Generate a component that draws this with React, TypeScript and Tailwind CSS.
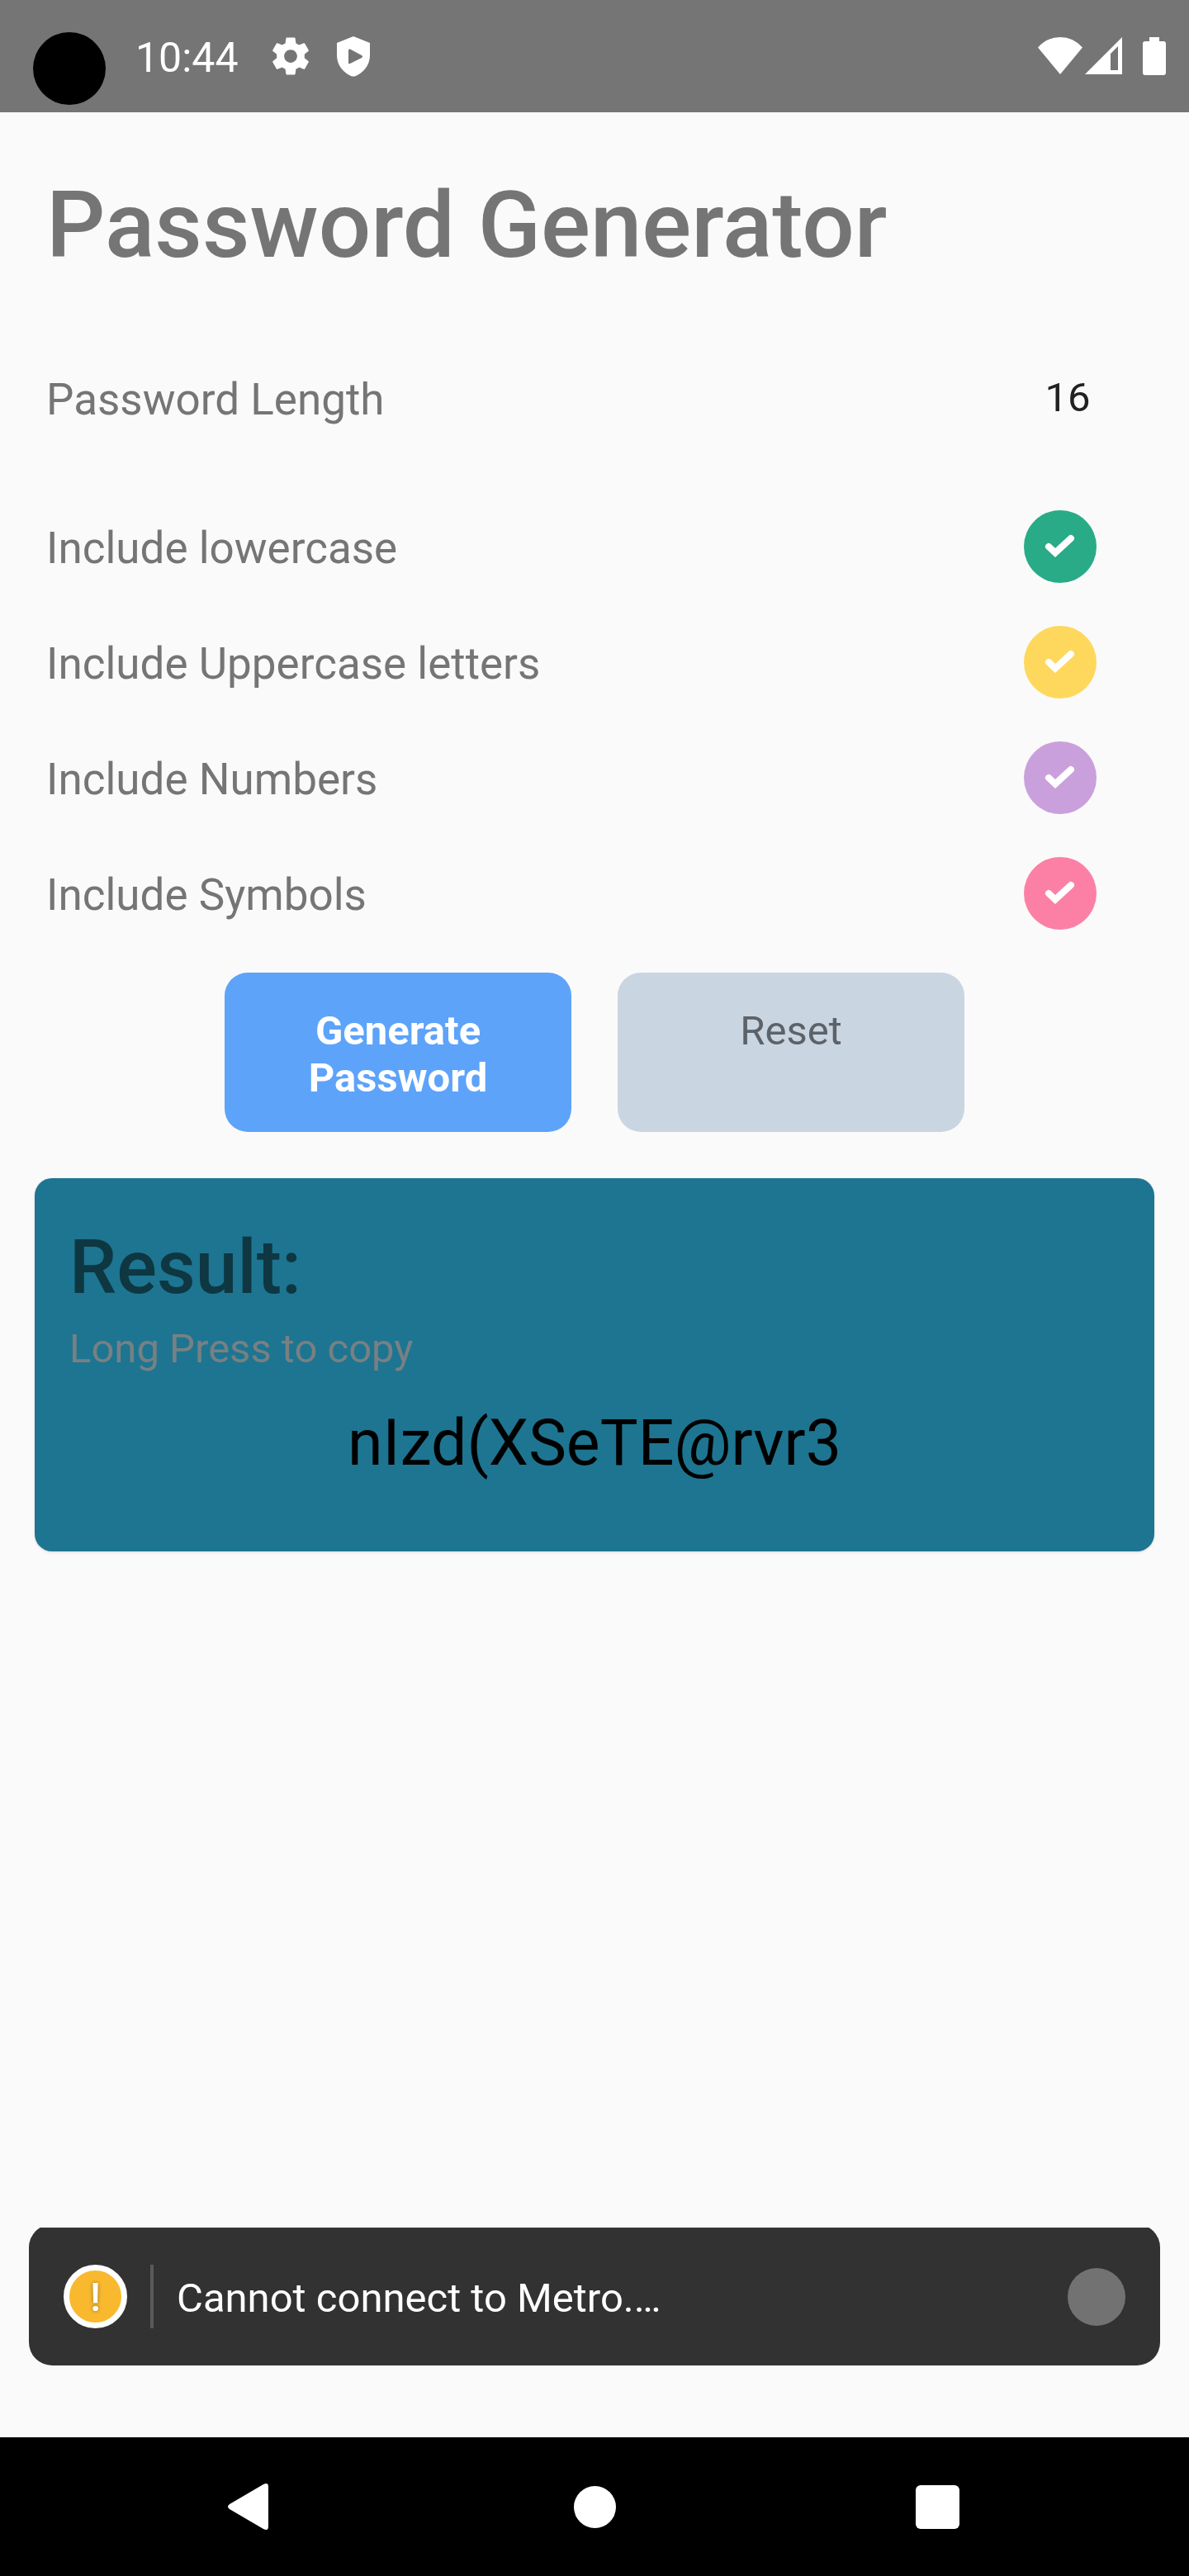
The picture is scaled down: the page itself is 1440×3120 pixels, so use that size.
import { useState } from "react";

const OPTIONS = [
  { id: "lower", label: "Include lowercase", color: "bg-[#29AB87]" },
  { id: "upper", label: "Include Uppercase letters", color: "bg-[#FED85D]" },
  { id: "numbers", label: "Include Numbers", color: "bg-[#C9A0DC]" },
  { id: "symbols", label: "Include Symbols", color: "bg-[#FC80A5]" },
];

function StatusBar() {
  return (
    <header className="flex h-[136px] shrink-0 items-center bg-[#757575] pr-7 pl-10 text-white">
      <span className="mt-[30px] size-[88px] shrink-0 rounded-full bg-black" />
      <span className="ml-9 pt-1 text-[50px] leading-[60px]">10:44</span>
      <svg className="ml-9 size-[54px]" viewBox="0 0 24 24" fill="currentColor" aria-hidden="true">
        <path d="M19.43 12.98c.04-.32.07-.64.07-.98s-.03-.66-.07-.98l2.11-1.65c.19-.15.24-.42.12-.64l-2-3.46c-.12-.22-.39-.3-.61-.22l-2.49 1c-.52-.4-1.08-.73-1.69-.98l-.38-2.65C14.46 2.18 14.25 2 14 2h-4c-.25 0-.46.18-.49.42l-.38 2.65c-.61.25-1.17.59-1.69.98l-2.49-1c-.23-.09-.49 0-.61.22l-2 3.46c-.13.22-.07.49.12.64l2.11 1.65c-.04.32-.07.65-.07.98s.03.66.07.98l-2.11 1.65c-.19.15-.24.42-.12.64l2 3.46c.12.22.39.3.61.22l2.49-1c.52.4 1.08.73 1.69.98l.38 2.65c.03.24.24.42.49.42h4c.25 0 .46-.18.49-.42l.38-2.65c.61-.25 1.17-.59 1.69-.98l2.49 1c.23.09.49 0 .61-.22l2-3.46c.12-.22.07-.49-.12-.64l-2.11-1.65zM12 15.5c-1.93 0-3.5-1.57-3.5-3.5s1.57-3.5 3.5-3.5 3.500 1.570 3.500 3.500-1.570 3.500-3.500 3.500z" />
      </svg>
      <svg className="ml-7 h-[50px] w-[42px]" viewBox="0 0 42 50" fill="currentColor" fillRule="evenodd" aria-hidden="true">
        <path d="M21 1 41 9V24C41 36 33 45 24 49Q21 50 18 49C9 45 1 36 1 24V9ZM15 18V33Q15 35 17 34L31 27Q33 25.500 31 24L17 16.500Q15 16 15 18Z" />
      </svg>
      <svg className="ml-auto h-[46px] w-[54px]" viewBox="0 0 54 46" fill="currentColor" aria-hidden="true">
        <path d="M0 12.500Q11 0 27 0T54 12.500L27 45Z" />
      </svg>
      <svg className="ml-[3px] size-[46px]" viewBox="0 0 46 46" fill="currentColor" fillRule="evenodd" aria-hidden="true">
        <path d="M0 45 45 0V45ZM31 20V40H40V11Z" />
      </svg>
      <svg className="ml-6 h-[46px] w-7" viewBox="0 0 28 46" fill="currentColor" aria-hidden="true">
        <path d="M8 0H20V5H25Q28 5 28 8V43Q28 46 25 46H3Q0 46 0 43V8Q0 5 3 5H8Z" />
      </svg>
    </header>
  );
}

function Toggle({ id, label, color }: { id: string; label: string; color: string }) {
  const [on, setOn] = useState(true);
  return (
    <div className="flex h-[140px] items-center justify-between">
      <label htmlFor={id} className="pt-1 text-[53px] leading-[62px]">
        {label}
      </label>
      <span className={`relative size-[88px] shrink-0 rounded-full ${color}`}>
        <input
          id={id}
          type="checkbox"
          checked={on}
          onChange={() => setOn(!on)}
          className="absolute inset-0 size-full cursor-pointer appearance-none rounded-full"
        />
        {on && (
          <svg className="pointer-events-none size-full" viewBox="0 0 88 88" fill="none" stroke="#fff" strokeWidth="8" strokeLinecap="round" aria-hidden="true">
            <path d="M30 44 38 51.500 57 34" />
          </svg>
        )}
      </span>
    </div>
  );
}

export default function App() {
  const [length, setLength] = useState("16");
  return (
    <div className="flex min-h-screen flex-col bg-[#FAFAFA] font-[Roboto,sans-serif] text-[#757575]">
      <StatusBar />
      <main className="flex flex-1 flex-col">
        <form onSubmit={(e) => e.preventDefault()}>
          <h1 className="px-14 pt-[71px] text-[112px] leading-[132px] font-medium">Password Generator</h1>
          <div className="mt-[77px] flex h-[132px] items-center justify-between pr-[112px] pl-14">
            <label htmlFor="length" className="pt-1 text-[53px] leading-[62px]">
              Password Length
            </label>
            <input
              id="length"
              value={length}
              onChange={(e) => setLength(e.target.value)}
              inputMode="numeric"
              className="w-[70px] bg-transparent text-center text-[49px] leading-[58px] text-[#212121] outline-none"
            />
          </div>
          <div className="mt-11 pr-[112px] pl-14">
            {OPTIONS.map((o) => (
              <Toggle key={o.id} {...o} />
            ))}
          </div>
          <div className="mt-[26px] flex justify-center gap-14">
            <button
              type="submit"
              className="flex w-[420px] items-start justify-center rounded-[28px] bg-[#5DA3FA] px-[84px] pt-[42px] pb-[37px] text-center text-[49px] leading-[57px] font-bold text-white"
            >
              Generate Password
            </button>
            <button
              type="reset"
              className="flex w-[420px] items-start justify-center rounded-[28px] bg-[#CAD5E2] px-[84px] pt-[42px] pb-[37px] text-[49px] leading-[57px] text-[#5C6268]"
            >
              Reset
            </button>
          </div>
        </form>
        <section className="mx-[42px] mt-14 rounded-[21px] bg-[#1D7591] px-[42px] pt-[55px] pb-[86px] shadow-[0_1px_3px_rgba(0,0,0,0.15)]">
          <h2 className="text-[91px] leading-[107px] font-medium text-[#0E3742]">Result:</h2>
          <p className="mt-4 text-[49px] leading-[57px] text-[#788083]">Long Press to copy</p>
          <p className="mt-[41px] text-center text-[77px] leading-[90px] text-black">nIzd(XSeTE@rvr3</p>
        </section>
        <div role="alert" className="mx-[35px] mt-auto mb-[87px] overflow-hidden">
          <div className="-mt-1 flex h-[171px] items-center rounded-[28px] bg-[#323232] pt-1 pr-[42px] pl-[42px] text-white">
            <span className="flex size-[77px] shrink-0 items-center justify-center rounded-full border-[7px] border-white bg-[#F9B92F] pt-0.5 text-[49px] leading-[57px] font-medium [text-shadow:0_0_5px_rgba(0,0,0,0.4)]">
              !
            </span>
            <span className="ml-7 h-[77px] w-1 shrink-0 bg-[#5A5A5A]" />
            <span className="ml-7 flex-1 pt-1 text-[49px] leading-[57px]">Cannot connect to Metro.…</span>
            <button type="button" aria-label="Dismiss" className="size-[70px] shrink-0 rounded-full bg-[#727272]" />
          </div>
        </div>
      </main>
      <nav className="grid h-[168px] shrink-0 grid-cols-[415px_415px_415px] justify-center bg-black text-white">
        <button type="button" aria-label="Back" className="flex items-center justify-center">
          <svg className="h-14 w-[60px]" viewBox="0 0 60 56" fill="currentColor" aria-hidden="true">
            <path d="M44 1Q50 -2 50 4V52Q50 58 44 55L3 31Q-1 28 3 25Z" />
          </svg>
        </button>
        <button type="button" aria-label="Home" className="flex items-center justify-center">
          <span className="size-[51px] rounded-full bg-white" />
        </button>
        <button type="button" aria-label="Recent apps" className="flex items-center justify-center">
          <span className="size-[53px] rounded-md bg-white" />
        </button>
      </nav>
    </div>
  );
}
